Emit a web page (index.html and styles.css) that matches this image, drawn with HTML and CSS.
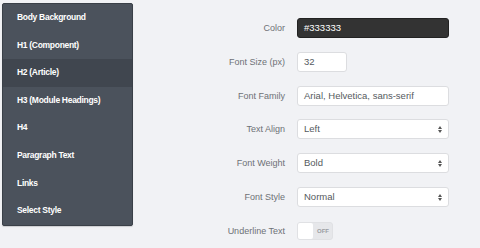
FILE: index.html
```html
<!DOCTYPE html>
<html lang="en">
<head>
    <meta charset="UTF-8">
    <title>Style Editor</title>
    <link rel="stylesheet" href="styles.css">
</head>
<body>
    <div class="page">
        <ul class="menu">
            <li>Body Background</li>
            <li>H1 (Component)</li>
            <li class="active">H2 (Article)</li>
            <li>H3 (Module Headings)</li>
            <li>H4</li>
            <li>Paragraph Text</li>
            <li>Links</li>
            <li>Select Style</li>
        </ul>

        <div class="form">
            <label>Color</label>
            <div class="field color">#333333</div>

            <label>Font Size (px)</label>
            <div class="field small">32</div>

            <label>Font Family</label>
            <div class="field">Arial, Helvetica, sans-serif</div>

            <label>Text Align</label>
            <div class="field select">Left<span class="arrows"></span></div>

            <label>Font Weight</label>
            <div class="field select">Bold<span class="arrows"></span></div>

            <label>Font Style</label>
            <div class="field select">Normal<span class="arrows"></span></div>

            <label>Underline Text</label>
            <div class="toggle"><span class="knob"></span><span class="off">OFF</span></div>
        </div>
    </div>
</body>
</html>
```

FILE: styles.css
```css
body {
    margin: 0;
    background-color: #f1f2f5;
    font-family: "Liberation Sans", Arial, sans-serif;
}
.page {
    display: flex;
    align-items: flex-start;
    padding: 3px 0 0 2px;
}
.menu {
    list-style: none;
    margin: 0;
    padding: 0;
    width: 129px;
    background-color: #4b525c;
    border: 1px solid #3a4048;
    border-radius: 2px;
    box-shadow: 0 1px 1px rgba(0, 0, 0, 0.15);
}
.menu li {
    height: 27.6px;
    line-height: 27.6px;
    padding-left: 14px;
    font-size: 8.5px;
    font-weight: bold;
    letter-spacing: -0.3px;
    color: #ffffff;
}
.menu li.active {
    background-color: #40464f;
}
.form {
    flex: 1;
    display: grid;
    grid-template-columns: 1fr 152px;
    grid-auto-rows: 20px;
    row-gap: 13.8px;
    column-gap: 12px;
    padding: 15px 31px 0 0;
}
.form label {
    text-align: right;
    align-self: center;
    font-size: 9px;
    color: #6e7176;
}
.field {
    box-sizing: border-box;
    height: 20px;
    line-height: 18px;
    padding-left: 6px;
    background-color: #ffffff;
    border: 1px solid #dcdde0;
    border-radius: 3px;
    font-size: 9.5px;
    color: #555a60;
    position: relative;
}
.field.color {
    background-color: #333333;
    border-color: #222222;
    color: #ffffff;
}
.field.small {
    width: 50px;
}
.arrows {
    position: absolute;
    right: 6px;
    top: 6px;
    width: 0;
    height: 0;
    border-left: 2px solid transparent;
    border-right: 2px solid transparent;
    border-bottom: 3px solid #555;
}
.arrows::after {
    content: "";
    position: absolute;
    left: -2px;
    top: 4px;
    border-left: 2px solid transparent;
    border-right: 2px solid transparent;
    border-top: 3px solid #555;
}
.toggle {
    box-sizing: border-box;
    width: 36px;
    height: 18px;
    background-color: #e6e7ea;
    border: 1px solid #e0e1e4;
    border-radius: 3px;
    display: flex;
    align-items: center;
    align-self: center;
}
.knob {
    width: 15px;
    height: 16px;
    background-color: #ffffff;
    border-radius: 2px;
}
.off {
    margin-left: 4px;
    font-size: 6px;
    font-weight: bold;
    color: #9a9da2;
}
```
